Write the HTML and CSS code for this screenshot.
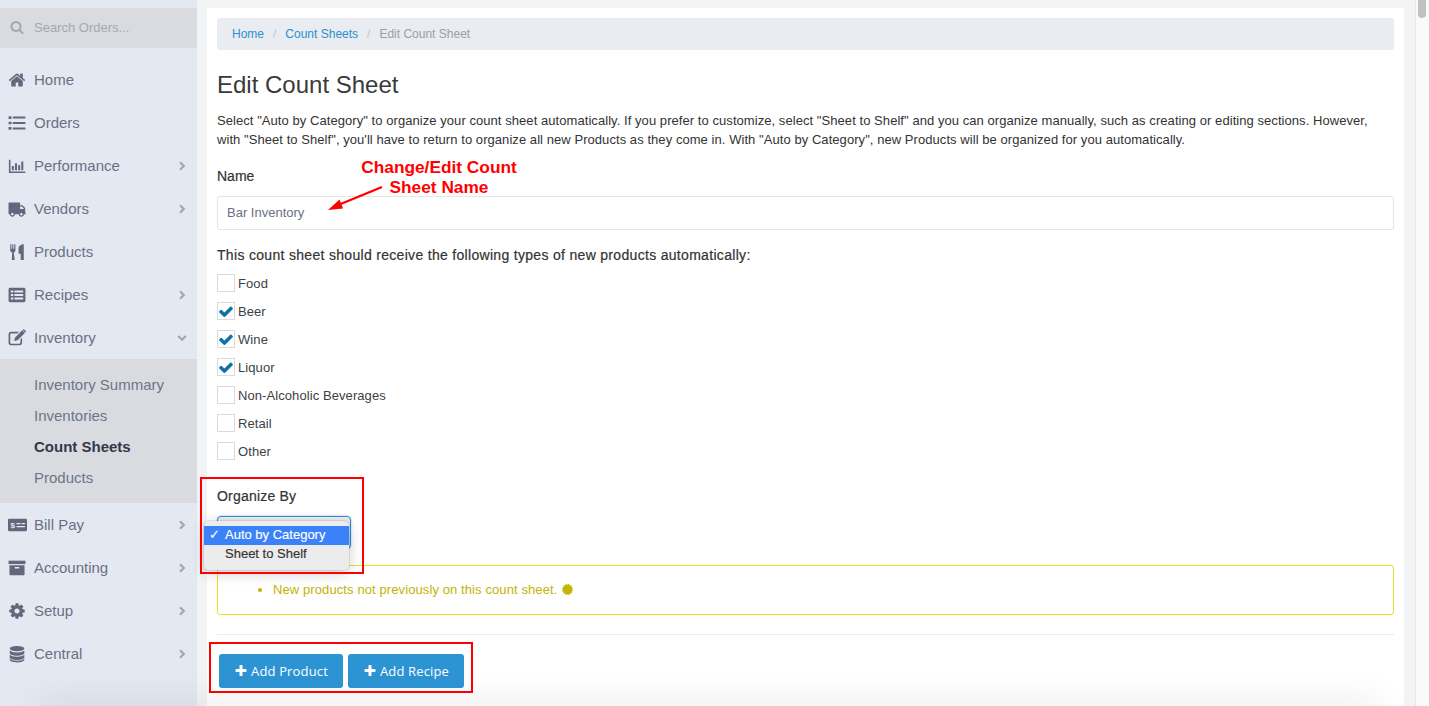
FILE: index.html
```html
<!DOCTYPE html>
<html lang="en">
<head>
<meta charset="utf-8">
<title>Edit Count Sheet</title>
<link rel="stylesheet" href="styles.css">
</head>
<body>
<div class="app">
  <aside class="sidebar">
    <div class="search">
      <svg class="search-icon" viewBox="0 0 1792 1792"><path d="M1216 832q0-185-131.5-316.5t-316.5-131.5-316.5 131.5-131.5 316.5 131.5 316.5 316.5 131.5 316.5-131.5 131.5-316.5zm512 832q0 52-38 90t-90 38q-54 0-90-38l-343-342q-179 124-399 124-143 0-273.5-55.5t-225-150-150-225-55.5-273.5 55.5-273.5 150-225 225-150 273.5-55.5 273.5 55.5 225 150 150 225 55.5 273.5q0 220-124 399l343 343q37 37 37 90z"/></svg>
      <span>Search Orders...</span>
    </div>
    <nav class="nav">
      <a class="nav-item">
        <svg class="ico" viewBox="0 0 1792 1792"><path d="M1472 992v480q0 26-19 45t-45 19h-384v-384h-256v384h-384q-26 0-45-19t-19-45v-480q0-1 .5-3t.5-3l575-474 575 474q1 2 1 6zm223-69l-62 74q-8 9-21 11h-3q-13 0-21-7l-692-577-692 577q-12 8-24 7-13-2-21-11l-62-74q-8-10-7-23.5t11-21.5l719-599q32-26 76-26t76 26l244 204v-195q0-14 9-23t23-9h192q14 0 23 9t9 23v408l219 182q10 8 11 21.5t-7 23.5z"/></svg>
        <span class="nav-label">Home</span>
      </a>
      <a class="nav-item">
        <svg class="ico" viewBox="0 0 16 16"><rect x="0.5" y="2" width="2.6" height="2.4" rx=".4"/><rect x="0.5" y="6.8" width="2.6" height="2.4" rx=".4"/><rect x="0.5" y="11.6" width="2.6" height="2.4" rx=".4"/><rect x="4.2" y="2.3" width="11.3" height="1.8" rx=".3"/><rect x="4.2" y="7.1" width="11.3" height="1.8" rx=".3"/><rect x="4.2" y="11.9" width="11.3" height="1.8" rx=".3"/></svg>
        <span class="nav-label">Orders</span>
      </a>
      <a class="nav-item">
        <svg class="ico" viewBox="0 0 16 16"><path d="M.8 2.5h1.4v10.300h13.200V14.200H.8z"/><rect x="3.400" y="8" width="1.800" height="3.800"/><rect x="6.200" y="5.600" width="1.800" height="6.200"/><rect x="9" y="7.200" width="1.800" height="4.600"/><rect x="11.800" y="4" width="1.800" height="7.800"/></svg>
        <span class="nav-label">Performance</span>
        <svg class="chev" viewBox="0 0 10 10"><path d="M3 1.200 6.800 5 3 8.800"/></svg>
      </a>
      <a class="nav-item">
        <svg class="ico ico-wide flip" viewBox="0 0 1792 1792"><path d="M640 1408q0-52-38-90t-90-38-90 38-38 90 38 90 90 38 90-38 38-90zm-384-512h384v-256h-158q-13 0-22 9l-195 195q-9 9-9 22v30zm1280 512q0-52-38-90t-90-38-90 38-38 90 38 90 90 38 90-38 38-90zm256-1088v1024q0 15-4 26.5t-13.5 18.5-16.5 11.5-23.5 6-22.5 2-25.5 0-22.5-.5q0 106-75 181t-181 75-181-75-75-181h-384q0 106-75 181t-181 75-181-75-75-181h-64q-3 0-22.5.5t-25.5 0-22.5-2-23.5-6-16.5-11.5-13.5-18.5-4-26.5q0-26 19-45t45-19v-320q0-8-.5-35t0-38 2.5-34.5 6.5-37 14-30.5 22.5-30l198-198q19-19 50.5-32t58.5-13h160v-192q0-26 19-45t45-19h1024q26 0 45 19t19 45z"/></svg>
        <span class="nav-label">Vendors</span>
        <svg class="chev" viewBox="0 0 10 10"><path d="M3 1.200 6.800 5 3 8.800"/></svg>
      </a>
      <a class="nav-item">
        <svg class="ico" viewBox="0 0 16 16"><path d="M2 1h1v4.200h.8V1h1v4.200h.8V1h1v5.400c0 1-.6 1.700-1.500 2L6 15H3.400l.3-6.600C2.700 8.100 2 7.400 2 6.400z"/><path d="M14 1v14h-2.700V9.600H9.400V4.800C9.400 2.500 11.400 1 14 1z"/></svg>
        <span class="nav-label">Products</span>
      </a>
      <a class="nav-item">
        <svg class="ico" viewBox="0 0 16 16"><path fill-rule="evenodd" d="M1.800 1.500h12.400c.7 0 1.300.6 1.300 1.300v10.400c0 .7-.6 1.300-1.300 1.300H1.800c-.7 0-1.300-.6-1.300-1.300V2.800c0-.7.6-1.300 1.300-1.300zM2.500 4v1.800h2.200V4zm3.200 0v1.800h7.800V4zM2.500 7.100v1.800h2.200V7.100zm3.200 0v1.800h7.800V7.100zm-3.200 3.100V12h2.200v-1.800zm3.200 0V12h7.800v-1.800z"/></svg>
        <span class="nav-label">Recipes</span>
        <svg class="chev" viewBox="0 0 10 10"><path d="M3 1.200 6.800 5 3 8.800"/></svg>
      </a>
      <a class="nav-item">
        <svg class="ico" viewBox="0 0 16 16"><path d="M2.500 2.500h7.300L8.300 4H2.800c-.5 0-.8.300-.8.800v7.400c0 .5.300.8.800.8h7.400c.5 0 .8-.3.8-.8V9.300l1.500-1.500v4.700c0 1.100-.9 2-2 2H2.500c-1.100 0-2-.9-2-2v-8c0-1.100.9-2 2-2z"/><path d="M12.600 1.200 15 3.600 8.500 10.100l-3 .6.600-3zM13.400.4c.3-.3.7-.3 1 0l1.400 1.400c.3.300.3.700 0 1l-.4.400-2.400-2.400z"/></svg>
        <span class="nav-label">Inventory</span>
        <svg class="chev" viewBox="0 0 10 10"><path d="M1.200 3 5 6.800 8.800 3"/></svg>
      </a>
      <div class="subnav">
        <a class="sub-item">Inventory Summary</a>
        <a class="sub-item">Inventories</a>
        <a class="sub-item active">Count Sheets</a>
        <a class="sub-item">Products</a>
      </div>
      <a class="nav-item">
        <svg class="ico ico-wide" viewBox="0 0 20 16"><path fill-rule="evenodd" d="M1.200 1.500h17.600c.7 0 1.200.5 1.200 1.200v10.600c0 .7-.5 1.200-1.200 1.200H1.200C.5 14.500 0 14 0 13.300V2.700c0-.7.5-1.200 1.200-1.200zM9 6v1.300h4V6zm5.200 0v1.300h3.600V6zM9 9v1.300h8.800V9z"/><text class="bill-sign" x="2.600" y="11">$</text></svg>
        <span class="nav-label">Bill Pay</span>
        <svg class="chev" viewBox="0 0 10 10"><path d="M3 1.200 6.800 5 3 8.800"/></svg>
      </a>
      <a class="nav-item">
        <svg class="ico" viewBox="0 0 16 16"><rect x="0.500" y="1.500" width="15" height="3"/><path fill-rule="evenodd" d="M1.300 5.500h13.400v8.200c0 .4-.4.800-.8.800H2.100c-.4 0-.8-.4-.8-.8zM6 7.200v1.200h4V7.200z"/></svg>
        <span class="nav-label">Accounting</span>
        <svg class="chev" viewBox="0 0 10 10"><path d="M3 1.200 6.800 5 3 8.800"/></svg>
      </a>
      <a class="nav-item">
        <svg class="ico" viewBox="0 0 1792 1792"><path d="M1152 896q0-106-75-181t-181-75-181 75-75 181 75 181 181 75 181-75 75-181zm512-109v222q0 12-8 23t-20 13l-185 28q-19 54-39 91 35 50 107 138 10 12 10 25t-9 23q-27 37-99 108t-94 71q-12 0-26-9l-138-108q-44 23-91 38-16 136-29 186-7 28-36 28h-222q-14 0-24.500-8.500t-11.500-21.500l-28-184q-49-16-90-37l-141 107q-10 9-25 9-14 0-25-11-126-114-165-168-7-10-7-23 0-12 8-23 15-21 51-66.500t54-70.500q-27-50-41-99l-183-27q-13-2-21-12.500t-8-23.500v-222q0-12 8-23t19-13l186-28q14-46 39-92-40-57-107-138-10-12-10-24 0-10 9-23 26-36 98.500-107.500t94.500-71.500q13 0 26 10l138 107q44-23 91-38 16-136 29-186 7-28 36-28h222q14 0 24.500 8.500t11.500 21.500l28 184q49 16 90 37l142-107q9-9 24-9 13 0 25 10 129 119 165 170 7 8 7 22 0 12-8 23-15 21-51 66.500t-54 70.500q26 50 41 98l183 28q13 2 21 12.500t8 23.500z"/></svg>
        <span class="nav-label">Setup</span>
        <svg class="chev" viewBox="0 0 10 10"><path d="M3 1.200 6.800 5 3 8.800"/></svg>
      </a>
      <a class="nav-item">
        <svg class="ico" viewBox="0 0 16 16"><ellipse cx="8" cy="3.200" rx="6.500" ry="2.400"/><path d="M1.500 4.700C2.500 6.100 5 6.700 8 6.700s5.500-.6 6.500-2v2.400c0 1.300-2.900 2.400-6.500 2.400S1.500 8.400 1.500 7.100z"/><path d="M1.500 8.500C2.500 9.900 5 10.500 8 10.500s5.500-.6 6.500-2v2.400c0 1.300-2.900 2.400-6.500 2.400s-6.500-1.100-6.500-2.400z"/><path d="M1.500 12C2.500 13.400 5 14 8 14s5.500-.6 6.500-2v1.200c0 1.300-2.900 2.300-6.500 2.300s-6.500-1-6.500-2.300z"/></svg>
        <span class="nav-label">Central</span>
        <svg class="chev" viewBox="0 0 10 10"><path d="M3 1.200 6.800 5 3 8.800"/></svg>
      </a>
    </nav>
  </aside>

  <main class="main">
    <section class="panel">
      <ol class="crumbs">
        <li><a>Home</a></li>
        <li class="sep">/</li>
        <li><a>Count Sheets</a></li>
        <li class="sep">/</li>
        <li class="current">Edit Count Sheet</li>
      </ol>
      <h1 class="title">Edit Count Sheet</h1>
      <p class="intro">Select "Auto by Category" to organize your count sheet automatically. If you prefer to customize, select "Sheet to Shelf" and you can organize manually, such as creating or editing sections. However, with "Sheet to Shelf", you'll have to return to organize all new Products as they come in. With "Auto by Category", new Products will be organized for you automatically.</p>

      <div class="label name-label">Name</div>
      <div class="input">Bar Inventory</div>

      <div class="label types-label">This count sheet should receive the following types of new products automatically:</div>
      <ul class="checks">
        <li class="check"><span class="box"></span>Food</li>
        <li class="check"><span class="box"><svg viewBox="0 0 1792 1792"><path d="M1671 566q0 40-28 68l-724 724-136 136q-28 28-68 28t-68-28l-136-136-362-362q-28-28-28-68t28-68l136-136q28-28 68-28t68 28l294 295 656-657q28-28 68-28t68 28l136 136q28 28 28 68z"/></svg></span>Beer</li>
        <li class="check"><span class="box"><svg viewBox="0 0 1792 1792"><path d="M1671 566q0 40-28 68l-724 724-136 136q-28 28-68 28t-68-28l-136-136-362-362q-28-28-28-68t28-68l136-136q28-28 68-28t68 28l294 295 656-657q28-28 68-28t68 28l136 136q28 28 28 68z"/></svg></span>Wine</li>
        <li class="check"><span class="box"><svg viewBox="0 0 1792 1792"><path d="M1671 566q0 40-28 68l-724 724-136 136q-28 28-68 28t-68-28l-136-136-362-362q-28-28-28-68t28-68l136-136q28-28 68-28t68 28l294 295 656-657q28-28 68-28t68 28l136 136q28 28 28 68z"/></svg></span>Liquor</li>
        <li class="check"><span class="box"></span>Non-Alcoholic Beverages</li>
        <li class="check"><span class="box"></span>Retail</li>
        <li class="check"><span class="box"></span>Other</li>
      </ul>

      <div class="label organize-label">Organize By</div>
      <div class="select-wrap">
        <div class="select"></div>
        <div class="popup">
          <div class="opt selected"><span class="tick">✓</span>Auto by Category</div>
          <div class="opt">Sheet to Shelf</div>
        </div>
      </div>

      <div class="notice">
        <ul class="notice-list">
          <li>New products not previously on this count sheet. <svg class="burst" viewBox="0 0 1792 1792"><path d="M1504 896l138 135q30 28 20 70-12 41-52 51l-188 48 53 186q12 41-19 70-29 31-70 19l-186-53-48 188q-10 40-51 52-12 2-19 2-31 0-51-22l-135-138-135 138q-28 30-70 20-41-11-51-52l-48-188-186 53q-41 12-70-19-31-29-19-70l53-186-188-48q-40-10-52-51-10-42 20-70l138-135-138-135q-30-28-20-70 12-41 52-51l188-48-53-186q-12-41 19-70 29-31 70-19l186 53 48-188q10-41 51-51 41-12 70 19l135 139 135-139q29-30 70-19 41 10 51 51l48 188 186-53q41-12 70 19 31 29 19 70l-53 186 188 48q40 10 52 51 10 42-20 70z"/></svg></li>
        </ul>
      </div>

      <hr class="rule">

      <div class="actions">
        <button class="btn btn-product"><svg viewBox="0 0 1792 1792"><path d="M1600 736v192q0 40-28 68t-68 28h-416v416q0 40-28 68t-68 28h-192q-40 0-68-28t-28-68v-416h-416q-40 0-68-28t-28-68v-192q0-40 28-68t68-28h416v-416q0-40 28-68t68-28h192q40 0 68 28t28 68v416h416q40 0 68 28t28 68z"/></svg>Add Product</button>
        <button class="btn btn-recipe"><svg viewBox="0 0 1792 1792"><path d="M1600 736v192q0 40-28 68t-68 28h-416v416q0 40-28 68t-68 28h-192q-40 0-68-28t-28-68v-416h-416q-40 0-68-28t-28-68v-192q0-40 28-68t68-28h416v-416q0-40 28-68t68-28h192q40 0 68 28t28 68v416h416q40 0 68 28t28 68z"/></svg>Add Recipe</button>
      </div>
    </section>
  </main>

  <div class="scrollbar"><div class="thumb"></div></div>

  <div class="note">Change/Edit Count<br>Sheet Name</div>
  <svg class="arrow" viewBox="0 0 60 30"><path d="M56 2 11 20.500"/><path class="arrow-head" d="M2 25 13.500 14.500 17 23.500z"/></svg>
  <div class="mark mark-select"></div>
  <div class="mark mark-buttons"></div>
  <div class="fade"></div>
</div>
</body>
</html>
```
FILE: styles.css
```css
* { box-sizing: border-box; }
html, body { margin: 0; height: 100%; overflow: hidden; }
body { font-family: "Liberation Sans", Arial, sans-serif; font-size: 13px; color: #333; }
a { text-decoration: none; }
ul, ol { list-style: none; margin: 0; padding: 0; }

.app { position: relative; display: flex; width: 1429px; height: 706px; overflow: hidden; background: #f2f3f5; }

/* Sidebar */
.sidebar { flex: 0 0 197px; background: #e4e8f1; padding-top: 8px; }
.search { display: flex; align-items: center; height: 40px; background: #d9dbe1; padding: 0 0 2px 10px; color: #a5a8b2; font-size: 13px; }
.search-icon { width: 14px; height: 14px; margin-right: 10px; fill: #a5a8b2; }
.nav { margin-top: 10px; }
.nav-item { display: flex; align-items: center; height: 43px; padding: 0 9px 0 8px; color: #6a7084; font-size: 15px; }
.ico { flex: 0 0 18px; width: 18px; height: 18px; margin-right: 8px; fill: #62677c; }
.ico-wide { flex-basis: 19px; width: 19px; margin-right: 7px; }
.flip { transform: scaleX(-1); }
.bill-sign { font-family: "Liberation Sans", Arial, sans-serif; font-size: 8.500px; font-weight: 700; fill: #e4e8f1; }
.nav-label { flex: 1; }
.chev { flex: 0 0 10px; width: 10px; height: 10px; margin-right: 1px; fill: none; stroke: #a3a7b4; stroke-width: 2.200; }
.subnav { background: #d9dbe1; padding: 10px 0; }
.sub-item { display: block; height: 31px; line-height: 31px; padding-left: 34px; color: #6f7488; font-size: 15px; }
.sub-item.active { color: #34374a; font-weight: 700; }

/* Main */
.main { flex: 1; padding: 8px 11px 0 10px; min-width: 0; }
.panel { height: 100%; background: #fff; padding: 10px; }
.crumbs { display: flex; align-items: center; height: 32px; background: #e9ecf0; border-radius: 3px; padding: 0 15px 1px; font-size: 12px; }
.crumbs a { color: #2a90d2; }
.crumbs .sep { color: #c3c7cf; margin: 0 9px; }
.crumbs .current { color: #9a9ea8; }
.title { margin: 21px 0 0; font-size: 24px; font-weight: 400; line-height: 28px; color: #3a3a3a; }
.intro { margin: 12px 0 0; line-height: 19px; color: #333; font-size: 13px; letter-spacing: .06px; }
.label { font-size: 14px; line-height: 18px; color: #333; -webkit-text-stroke: .2px #333; }
.name-label { margin-top: 18px; }
.input { height: 34px; margin-top: 11px; padding-left: 9px; line-height: 32px; border: 1px solid #e3e5e9; border-radius: 3px; color: #6a7084; font-size: 13px; }
.types-label { margin-top: 16px; letter-spacing: .31px; }
.checks { margin-top: 5px; }
.check { display: flex; align-items: center; height: 28px; color: #3d3f46; font-size: 13px; letter-spacing: .08px; }
.box { display: flex; align-items: center; justify-content: center; width: 18px; height: 18px; margin-right: 3px; border: 1px solid #d9dbdf; }
.box svg { width: 17px; height: 17px; fill: #0f73a6; }
.organize-label { margin-top: 22px; letter-spacing: .2px; }
.select-wrap { position: relative; height: 33px; margin-top: 11px; }
.select { width: 134px; height: 33px; border: 1px solid #2e8fd8; border-radius: 4px; background: linear-gradient(#f0f0f0, #cfcfcf); box-shadow: 0 0 2px rgba(46,143,216,.6); }
.popup { position: absolute; left: -13px; top: 5px; width: 145px; height: 49px; padding-top: 5px; background: #ececec; border-radius: 5px; box-shadow: 0 3px 14px rgba(0,0,0,.2), 0 0 0 1px rgba(0,0,0,.07); color: #333; font-size: 13px; }
.opt { position: relative; height: 19px; line-height: 17px; padding-left: 21px; -webkit-text-stroke: .15px currentColor; }
.opt.selected { background: #3b82f8; color: #fff; }
.tick { position: absolute; left: 5px; font-family: "DejaVu Sans", sans-serif; font-size: 13px; font-weight: 700; }
.notice { height: 50px; margin-top: 16px; border: 1px solid #e6e12a; border-radius: 3px; color: #c2b400; }
.notice-list { padding: 15px 0 0 55px; list-style: disc; line-height: 18px; }
.notice-list li { font-size: 13px; letter-spacing: .1px; }
.burst { width: 13px; height: 13px; vertical-align: -2px; fill: #c2b400; }
.rule { margin: 19px 0 0; border: 0; border-top: 1px solid #ebecef; }
.actions { display: flex; gap: 5px; margin-top: 19px; padding-left: 2px; }
.btn { display: flex; align-items: center; justify-content: center; height: 34px; padding: 0; border: 0; border-radius: 3px; background: #2d94d4; color: #fff; font-family: "Open Sans", sans-serif; font-size: 13px; letter-spacing: .15px; }
.btn svg { width: 14px; height: 14px; margin-right: 3px; fill: #fff; }
.btn-product { width: 124px; }
.btn-recipe { width: 116px; }

/* Scrollbar */
.scrollbar { flex: 0 0 14px; background: #fafafa; border-left: 1px solid #e6e6e6; padding: 0 3px 0 2px; }
.thumb { width: 8px; height: 18px; background: #c1c1c1; border-radius: 0 0 4px 4px; }

/* Overlays: screenshot annotations */
.note { position: absolute; left: 339px; top: 157px; width: 200px; text-align: center; color: #f00; font-size: 17.300px; font-weight: 700; line-height: 20px; }
.arrow { position: absolute; left: 326px; top: 185px; width: 60px; height: 30px; }
.arrow path { stroke: #f00; stroke-width: 2.400; fill: none; }
.arrow .arrow-head { fill: #f00; stroke: none; }
.mark { position: absolute; border: 2px solid #f00; pointer-events: none; }
.mark-select { left: 200px; top: 477px; width: 164px; height: 97px; }
.mark-buttons { left: 209px; top: 642px; width: 264px; height: 51px; }
.fade { position: absolute; left: 40px; right: 50px; top: 706px; height: 10px; box-shadow: 0 0 34px 2px rgba(0,0,0,.12); pointer-events: none; }
```
